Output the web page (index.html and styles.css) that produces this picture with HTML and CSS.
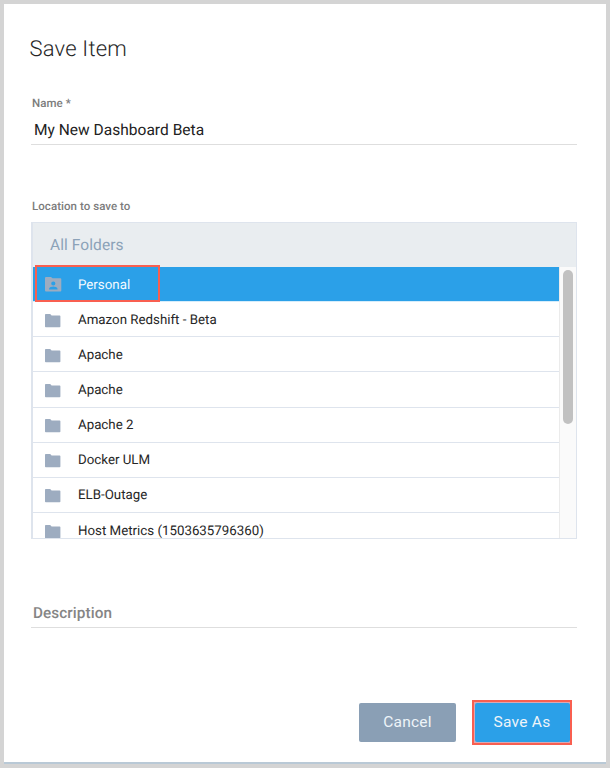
FILE: index.html
```html
<!DOCTYPE html>
<html lang="en">
<head>
<meta charset="utf-8">
<title>Save Item</title>
<link rel="stylesheet" href="styles.css">
</head>
<body>
<svg class="defs" aria-hidden="true">
  <symbol id="folder" viewBox="0 0 16 14"><path d="M.8 0h4.4L6.6 1.4h8a.8.8 0 0 1 .8.8v10.2a.8.8 0 0 1-.8.8H.8a.8.8 0 0 1-.8-.8V.8A.8.8 0 0 1 .8 0z"/></symbol>
</svg>
<main class="dialog">
  <h1 class="title">Save Item</h1>
  <div class="field">
    <div class="label">Name *</div>
    <div class="value"><span class="name">My New Dashboard Beta</span></div>
  </div>
  <div class="label location"><span class="location-text">Location to save to</span></div>
  <section class="browser">
    <header class="crumb"><span>All Folders</span></header>
    <div class="pane">
      <ul class="list">
        <li class="row selected"><svg class="icon personal" viewBox="0 0 17 15"><path fill-rule="evenodd" d="M1 0h5l1.6 1.3H15.3a1 1 0 0 1 1 1v11.3a1 1 0 0 1-1 1H1a1 1 0 0 1-1-1V1a1 1 0 0 1 1-1zM8.3 4.4a2.1 2.1 0 1 0 0 4.2 2.1 2.1 0 0 0 0-4.2zM4.1 12.6h8.4v-.9c0-1.5-2.8-2.2-4.2-2.2s-4.2.7-4.2 2.2z"/></svg><span>Personal</span></li>
        <li class="row"><svg class="icon"><use href="#folder"/></svg><span>Amazon Redshift - Beta</span></li>
        <li class="row"><svg class="icon"><use href="#folder"/></svg><span>Apache</span></li>
        <li class="row"><svg class="icon"><use href="#folder"/></svg><span>Apache</span></li>
        <li class="row"><svg class="icon"><use href="#folder"/></svg><span>Apache 2</span></li>
        <li class="row"><svg class="icon"><use href="#folder"/></svg><span>Docker ULM</span></li>
        <li class="row"><svg class="icon"><use href="#folder"/></svg><span>ELB-Outage</span></li>
        <li class="row"><svg class="icon"><use href="#folder"/></svg><span>Host Metrics (1503635796360)</span></li>
      </ul>
      <div class="track"><div class="thumb"></div></div>
    </div>
    <div class="highlight"></div>
  </section>
  <div class="description"><span>Description</span></div>
  <footer class="actions">
    <button class="button cancel">Cancel</button>
    <div class="marked"><button class="button save">Save As</button></div>
  </footer>
</main>
</body>
</html>
```
FILE: styles.css
```css
* { box-sizing: border-box; }
body {
  margin: 0;
  height: 768px;
  padding: 4px 4px 0;
  overflow: hidden;
  background: #d4d4d4;
  color: #262626;
  font-family: Roboto, "Liberation Sans", sans-serif;
  text-rendering: geometricPrecision;
}
.defs { position: absolute; width: 0; height: 0; }
.dialog {
  display: flex;
  flex-direction: column;
  width: 602px;
  height: 760px;
  padding: 31px 29px 0 27px;
  background: #fff;
  border-bottom: 2px solid #b9c9d6;
}
.title {
  margin: 0 0 0 -1.5px;
  height: 30px;
  font-size: 22px;
  line-height: 30px;
  font-weight: 300;
  letter-spacing: .2px;
}
.field { margin-top: 30px; height: 50px; border-bottom: 1px solid #dedede; }
.label {
  padding-left: 1px;
  font-size: 11.5px;
  line-height: 17px;
  font-weight: 500;
  letter-spacing: .05px;
  color: #7c7c7c;
}
.value { padding: 8px 0 0 3px; font-size: 15.5px; line-height: 20px; letter-spacing: .02px; color: #222; }
.location { margin-top: 53px; }
.browser {
  position: relative;
  margin-top: 7px;
  width: 546px;
  height: 317px;
  border: 1px solid #dee4ed;
  border-left-width: 2px;
}
.crumb {
  height: 44px;
  padding-left: 17px;
  background: #e9edf0;
  color: #8ca2b8;
  font-size: 15.5px;
  line-height: 45px;
  letter-spacing: .08px;
}
.pane { display: flex; height: 271px; overflow: hidden; }
.list { flex: 1; margin: 0; padding: 0; list-style: none; }
.row {
  display: flex;
  align-items: center;
  height: 35.15px;
  padding-left: 12px;
  border-bottom: 1px solid #dee4ed;
  font-size: 13.3px;
  letter-spacing: 0;
}
.row span { margin-left: 17px; padding-top: 2px; }
.icon { flex: none; width: 16px; height: 14px; margin-top: 3px; fill: #9dacc0; }
.selected { background: #2ba0e8; color: #f4faff; border-bottom-color: #d6edfb; }
.personal { width: 17px; height: 15px; margin-top: 1px; }
.selected span { margin-left: 16px; }
.track { width: 17px; border-left: 1px solid #ebebeb; background: #fafafa; padding: 3px 0 0 3px; }
.thumb { width: 10px; height: 154px; border-radius: 5px; background: #c1c1c1; }
.highlight {
  position: absolute;
  left: 2px;
  top: 42px;
  width: 125px;
  height: 37px;
  border: 2px solid #f95f50;
}
.description {
  margin-top: 62px;
  height: 27px;
  padding-left: 2px;
  border-bottom: 1px solid #dedede;
  color: #858585;
  font-size: 15.3px;
  line-height: 25px;
  font-weight: 500;
  letter-spacing: .08px;
}
.actions { display: flex; align-items: center; justify-content: flex-end; gap: 16px; margin: 72px 5px 0 0; }
.button {
  width: 97px;
  height: 39px;
  padding: 0;
  border: 0;
  border-radius: 2px;
  color: #eef4f9;
  font: 15.5px/39px Roboto, "Liberation Sans", sans-serif;
  letter-spacing: .25px;
}
.cancel { background: #8a9fb5; }
.marked { width: 100px; height: 45px; border: 2px solid #f95f50; background: #d9a8b4; }
.save { display: block; width: 95px; height: 39px; margin: 1px auto; background: #2ba0e8; }
```
